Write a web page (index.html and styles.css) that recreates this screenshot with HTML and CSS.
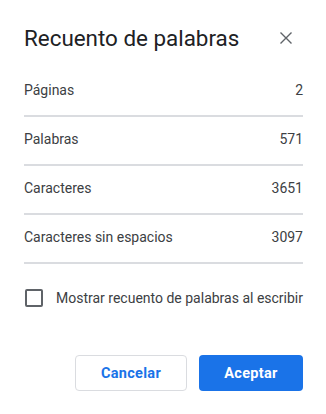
FILE: index.html
```html
<!DOCTYPE html>
<html lang="es">
<head>
  <meta charset="UTF-8">
  <meta name="viewport" content="width=device-width, initial-scale=1.0">
  <title>Recuento de palabras</title>
  <link rel="stylesheet" href="styles.css">
</head>
<body>

  <!-- Word count dialog -->
  <div class="dialog">
    <div class="dialog-header">
      <h1 class="dialog-title">Recuento de palabras</h1>
      <button class="close-btn" aria-label="Cerrar">
        <svg width="14" height="14" viewBox="0 0 14 14">
          <path d="M1.5 1.5 L12.5 12.5 M12.5 1.5 L1.5 12.5" stroke="#5f6368" stroke-width="1.4" fill="none"/>
        </svg>
      </button>
    </div>

    <div class="count-list">
      <div class="count-row"><span>Páginas</span><span>2</span></div>
      <div class="count-row"><span>Palabras</span><span>571</span></div>
      <div class="count-row"><span>Caracteres</span><span>3651</span></div>
      <div class="count-row"><span>Caracteres sin espacios</span><span>3097</span></div>
    </div>

    <label class="option">
      <span class="checkbox"></span>
      <span class="option-text">Mostrar recuento de palabras al escribir</span>
    </label>

    <div class="dialog-buttons">
      <button class="btn btn-cancel">Cancelar</button>
      <button class="btn btn-ok">Aceptar</button>
    </div>
  </div>

</body>
</html>
```

FILE: styles.css
```css
/* Page reset */
body {
  margin: 0;
  background-color: #fff;
  font-family: Roboto, "Liberation Sans", Arial, sans-serif;
  color: #3c4043;
}

/* Dialog box */
.dialog {
  width: 326px;
  height: 414px;
  box-sizing: border-box;
  padding: 24px 23px 0 24px;
}

/* Title and close button */
.dialog-header {
  display: flex;
  align-items: center;
  justify-content: space-between;
  height: 28px;
}

.dialog-title {
  margin: 0;
  font-size: 22.4px;
  font-weight: 400;
  line-height: 28px;
  color: #202124;
}

.close-btn {
  border: none;
  background: none;
  padding: 0;
  margin-right: 10px;
  width: 14px;
  height: 14px;
  display: flex;
}

/* Count rows */
.count-list {
  margin-top: 16px;
}

.count-row {
  display: flex;
  justify-content: space-between;
  align-items: center;
  height: 43px;
  padding-bottom: 4px;
  border-bottom: 2px solid #dadce0;
  font-size: 14px;
  color: #3c4043;
}

/* Checkbox option */
.option {
  display: flex;
  align-items: center;
  margin-top: 25px;
  font-size: 14px;
  color: #3c4043;
}

.option-text {
  white-space: nowrap;
}

.checkbox {
  flex-shrink: 0;
  width: 14px;
  height: 14px;
  border: 2px solid #5f6368;
  border-radius: 2px;
  margin-left: 1px;
  margin-right: 13px;
}

/* Action buttons */
.dialog-buttons {
  display: flex;
  justify-content: flex-end;
  gap: 12px;
  margin-top: 48px;
}

.btn {
  height: 36px;
  border-radius: 4px;
  font-family: Roboto, "Liberation Sans", Arial, sans-serif;
  font-size: 14.5px;
  font-weight: 700;
  letter-spacing: 0.3px;
}

.btn-cancel {
  width: 112px;
  background-color: #fff;
  border: 1px solid #dadce0;
  color: #1a73e8;
}

.btn-ok {
  width: 104px;
  background-color: #1a73e8;
  border: none;
  color: #fff;
}
```
